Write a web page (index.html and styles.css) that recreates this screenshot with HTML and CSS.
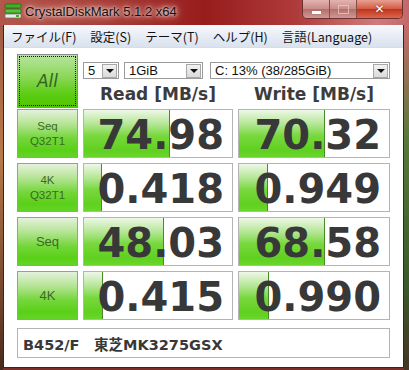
FILE: index.html
```html
<!DOCTYPE html>
<html lang="ja">
<head>
  <meta charset="UTF-8" />
  <title>CrystalDiskMark 5.1.2 x64</title>
  <link rel="stylesheet" href="styles.css">
</head>
<body>

  <div class="window">
    <div class="titlebar">
      <svg class="app-icon" width="18" height="16" viewBox="0 0 18 16">
        <rect x="1" y="1" width="16" height="4" rx="1" fill="#3fae2a" stroke="#1f6e16" stroke-width="0.8"/>
        <rect x="1" y="6" width="16" height="4" rx="1" fill="#56c23a" stroke="#1f6e16" stroke-width="0.8"/>
        <rect x="1" y="11" width="16" height="4" rx="1" fill="#e8ece8" stroke="#6a7a6a" stroke-width="0.8"/>
        <rect x="12" y="12" width="3" height="2" fill="#3fae2a"/>
      </svg>
      <span class="title">CrystalDiskMark 5.1.2 x64</span>
      <div class="caption-buttons">
        <span class="cap cap-min"><i></i></span>
        <span class="cap cap-max"><i></i></span>
        <span class="cap cap-close">✕</span>
      </div>
    </div>

    <div class="frame">
      <div class="menubar">
        <span>ファイル(F)</span>
        <span>設定(S)</span>
        <span>テーマ(T)</span>
        <span>ヘルプ(H)</span>
        <span>言語(Language)</span>
      </div>

      <div class="client">
        <div class="top">
          <div class="all-btn"><span>All</span></div>
          <div class="top-right">
            <div class="combos">
              <div class="combo combo-count"><span>5</span><b></b></div>
              <div class="combo combo-size"><span>1GiB</span><b></b></div>
              <div class="combo combo-drive"><span>C: 13% (38/285GiB)</span><b></b></div>
            </div>
            <div class="heads">
              <div class="head">Read [MB/s]</div>
              <div class="head head-write">Write [MB/s]</div>
            </div>
          </div>
        </div>

        <div class="results">
          <div class="label">Seq<br>Q32T1</div>
          <div class="value"><span class="bar" style="width: 86px"></span><span class="num">74.98</span></div>
          <div class="value"><span class="bar" style="width: 86px"></span><span class="num">70.32</span></div>

          <div class="label">4K<br>Q32T1</div>
          <div class="value"><span class="bar" style="width: 18px"></span><span class="num">0.418</span></div>
          <div class="value"><span class="bar" style="width: 29px"></span><span class="num">0.949</span></div>

          <div class="label label-big">Seq</div>
          <div class="value"><span class="bar" style="width: 80px"></span><span class="num">48.03</span></div>
          <div class="value"><span class="bar" style="width: 86px"></span><span class="num">68.58</span></div>

          <div class="label label-big">4K</div>
          <div class="value"><span class="bar" style="width: 19px"></span><span class="num">0.415</span></div>
          <div class="value"><span class="bar" style="width: 30px"></span><span class="num">0.990</span></div>
        </div>

        <div class="comment">B452/F　東芝MK3275GSX</div>
      </div>
    </div>
  </div>

</body>
</html>
```

FILE: styles.css
```css
body {
  margin: 0;
  background: #6a2a24;
}
.window {
  width: 409px;
  height: 370px;
  display: flex;
  flex-direction: column;
  background:
    linear-gradient(#a05a44, #b87a48 35%, #7a4a30 70%, #3a2018) left 0 top 25px / 3px 100% no-repeat,
    linear-gradient(#c86a6a, #5a7a3a 30%, #3a5a2a 70%, #4a2a24) right 0 top 25px / 5px 100% no-repeat,
    linear-gradient(#7a3028, #7a3028) left 0 bottom 0 / 100% 2px no-repeat,
    linear-gradient(90deg, #b4564c 0%, #a63e38 25%, #981c1c 50%, #ae3a3a 72%, #d07c7c 92%, #c26868 100%);
  overflow: hidden;
}

/* title bar */
.titlebar {
  height: 25px;
  display: flex;
  align-items: flex-start;
  flex-shrink: 0;
}
.app-icon {
  margin: 3px 0 0 4px;
}
.title {
  margin: 4px 0 0 3px;
  font-family: "Liberation Sans", sans-serif;
  font-size: 13px;
  color: #111;
  text-shadow: 0 0 6px #f4d0c8, 0 0 10px #f0c0b8, 0 0 3px #fff;
}
.caption-buttons {
  margin-left: auto;
  margin-right: 6px;
  display: flex;
  height: 18px;
  border: 1px solid #6e3030;
  border-top: none;
  border-radius: 0 0 5px 5px;
  overflow: hidden;
}
.cap {
  width: 26px;
  display: flex;
  align-items: center;
  justify-content: center;
  background: linear-gradient(#e4b4b0, #c88a86 50%, #b46e6a 51%, #d09894);
  border-right: 1px solid #8a4a48;
}
.cap-min i {
  width: 9px;
  height: 3px;
  margin-top: 6px;
  background: #fff;
  box-shadow: 0 0 1px #555;
}
.cap-max i {
  width: 9px;
  height: 7px;
  border: 1px solid #f0dcdc;
  opacity: 0.6;
}
.cap-close {
  width: 45px;
  border-right: none;
  background: linear-gradient(#e8a090, #d25a44 50%, #c2321c 51%, #d8684c);
  color: #fff;
  font-family: "DejaVu Sans", sans-serif;
  font-weight: bold;
  font-size: 12px;
  text-shadow: 0 0 2px #602010;
}

/* window body */
.frame {
  flex: 1;
  margin: 0 5px 2px 3px;
  display: flex;
  flex-direction: column;
  border: 1px solid #3a2420;
  border-top: none;
  background: #fff;
}
.menubar {
  height: 21px;
  display: flex;
  align-items: center;
  gap: 14px;
  padding-left: 7px;
  background: linear-gradient(#f6f8fc, #e4eaf4 60%, #dae2ee);
  border-top: 1px solid #f8f8ff;
  border-bottom: 1px solid #d8dce4;
  font-family: "Noto Sans CJK JP", sans-serif;
  font-size: 12.5px;
  color: #111;
}
.client {
  flex: 1;
  padding: 6px 12px 0 13px;
}

/* top controls */
.top {
  display: flex;
  gap: 5px;
  height: 54px;
}
.all-btn {
  width: 61px;
  box-sizing: border-box;
  border: 1px solid #8a8a8a;
  padding: 1px;
  background: linear-gradient(#b8e4a0, #8ed85c 40%, #5ccc14 75%, #50c800);
}
.all-btn span {
  height: 100%;
  display: flex;
  align-items: center;
  justify-content: center;
  box-sizing: border-box;
  border: 1px dotted #111;
  font-family: "DejaVu Sans", sans-serif;
  font-size: 17px;
  font-style: italic;
  color: #356420;
}
.top-right {
  display: flex;
  flex-direction: column;
  padding-top: 8px;
}
.combos {
  display: flex;
  height: 17px;
}
.combo {
  display: flex;
  align-items: center;
  box-sizing: border-box;
  border: 1px solid #9a9a9a;
  background: #fff;
  font-family: "Liberation Sans", sans-serif;
  font-size: 13px;
  color: #111;
}
.combo span {
  flex: 1;
  padding-left: 4px;
}
.combo b {
  width: 15px;
  height: 14px;
  margin-right: 1px;
  box-sizing: border-box;
  border: 1px solid #a8a8a8;
  background: linear-gradient(#f2f2f2, #dadada);
  position: relative;
}
.combo b::after {
  content: "";
  position: absolute;
  left: 3px;
  top: 4px;
  border-left: 4px solid transparent;
  border-right: 4px solid transparent;
  border-top: 4px solid #111;
}
.combo-count { width: 36px; }
.combo-size { width: 79px; margin-left: 5px; }
.combo-drive { width: 180px; margin-left: 7px; }
.heads {
  display: flex;
  gap: 5px;
  margin-top: auto;
}
.head {
  width: 150px;
  text-align: center;
  font-family: "DejaVu Sans", sans-serif;
  font-weight: bold;
  font-size: 17px;
  line-height: 27px;
  color: #3c3c3c;
}
.head-write { width: 152px; }

/* result grid */
.results {
  margin-top: 1px;
  display: grid;
  grid-template-columns: 61px 150px 152px;
  grid-auto-rows: 49px;
  gap: 5px;
}
.label {
  display: flex;
  align-items: center;
  justify-content: center;
  text-align: center;
  border: 1px solid #9c9c9c;
  background: linear-gradient(#e4f2dc, #b4e494 30%, #74d63a 60%, #5ad018 85%, #64d428);
  font-family: "Liberation Sans", sans-serif;
  font-size: 11.5px;
  line-height: 15px;
  color: #3a6a24;
}
.label-big {
  font-size: 13px;
}
.value {
  position: relative;
  display: flex;
  align-items: center;
  justify-content: flex-end;
  padding-right: 8px;
  border: 1px solid #b4b4b4;
  background: #fff;
}
.bar {
  position: absolute;
  left: 0;
  top: 0;
  bottom: 0;
  box-sizing: border-box;
  border-right: 1px solid #4a8a2a;
  background: linear-gradient(#eef8e8, #b4e694 30%, #78d83c 55%, #60d020 85%, #6ad62c);
}
.num {
  position: relative;
  margin-top: 3px;
  font-family: "DejaVu Sans", sans-serif;
  font-weight: bold;
  font-size: 40px;
  color: #383838;
}

/* comment */
.comment {
  margin-top: 8px;
  height: 30px;
  width: 373px;
  box-sizing: border-box;
  display: flex;
  align-items: center;
  padding-left: 5px;
  border: 1px solid #b4b4b4;
  font-family: "DejaVu Sans", "Noto Sans CJK JP", sans-serif;
  font-weight: bold;
  font-size: 14.5px;
  color: #383838;
}
```
